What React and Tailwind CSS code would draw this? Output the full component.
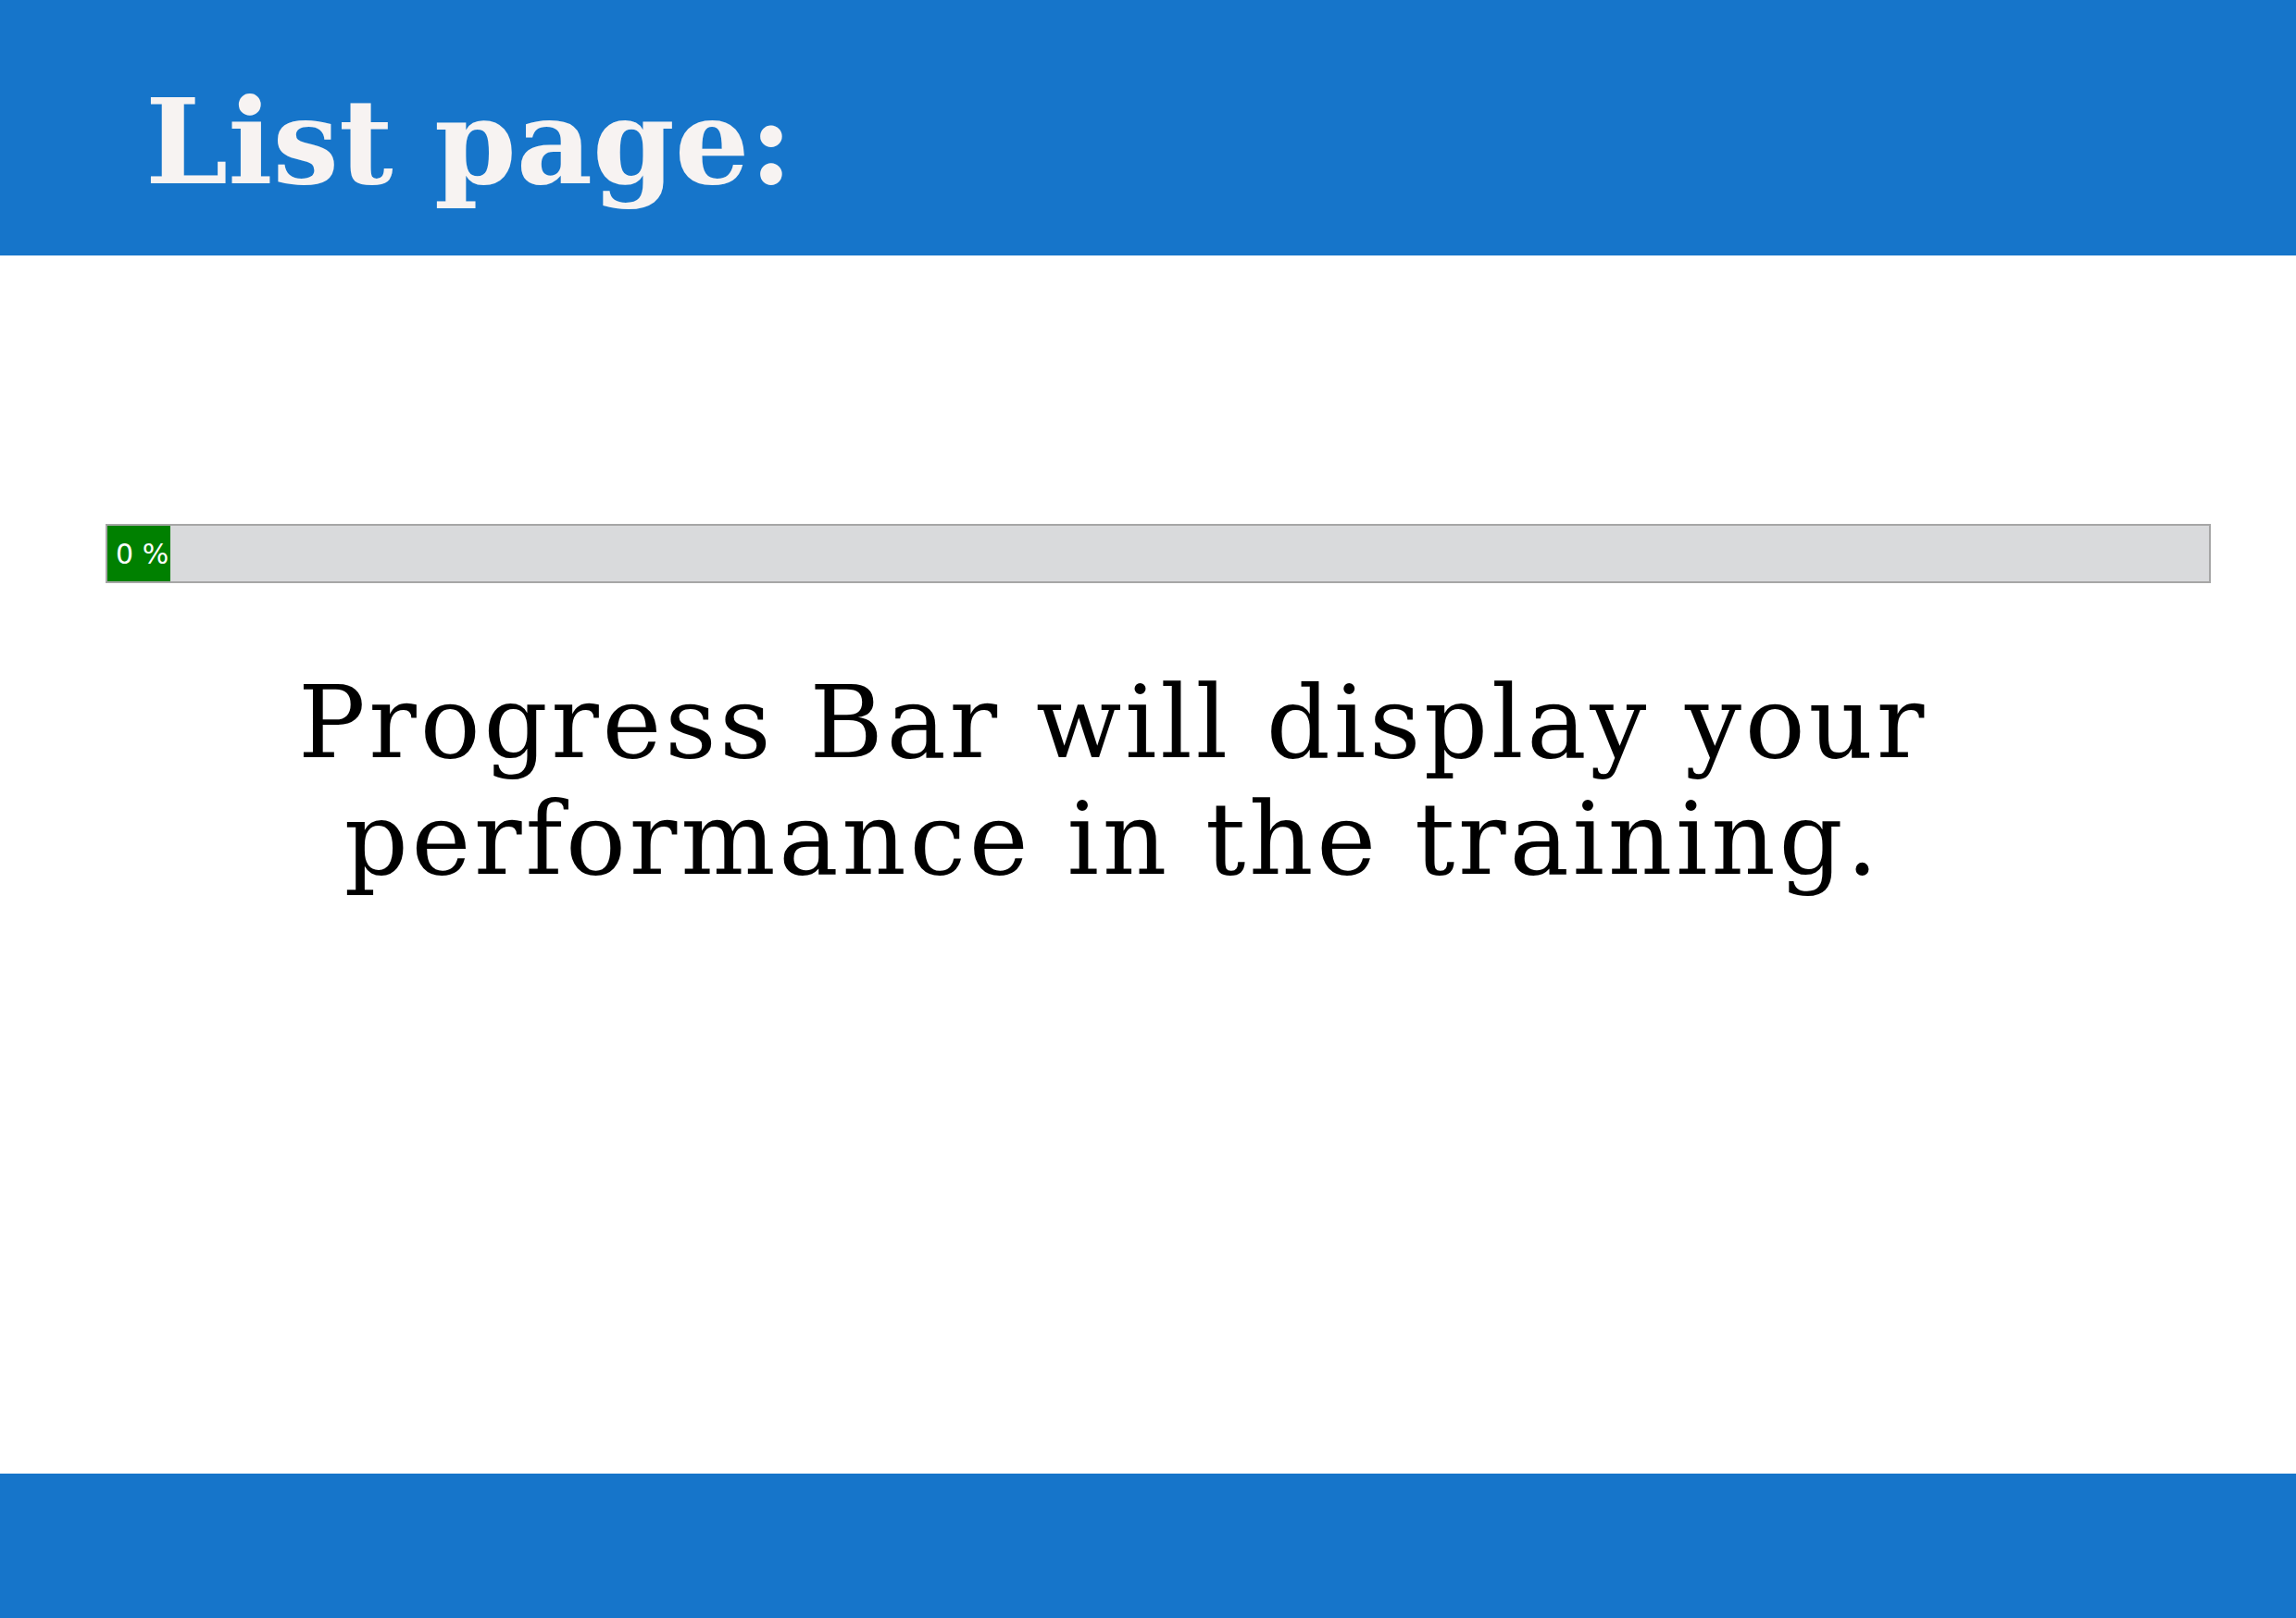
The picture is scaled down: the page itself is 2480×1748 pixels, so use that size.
export default function App() {
  const progress = 0

  return (
    <div className="flex h-[1748px] w-[2480px] flex-col bg-white">
      {/* Header */}
      <header className="h-[276px] shrink-0 bg-[#1675ca] pl-[157px] pt-[90px]">
        <h1 className="font-['DejaVu_Serif',serif] text-[127px] font-bold leading-none text-[#f7f3f2]">
          List page:
        </h1>
      </header>

      {/* Body */}
      <main className="flex-1 pt-[290px]">
        <div className="ml-[114px] mr-[92px] flex h-[64px] border-2 border-[#a6a6a6] bg-[#d9dadc]">
          <div
            className="flex items-center bg-[#008000] pl-[9px] font-['DejaVu_Sans',sans-serif] text-[30px] text-white"
            style={{ width: `${Math.max(progress, 3)}%` }}
          >
            {progress} %
          </div>
        </div>

        <p className="mt-[88px] pr-[76px] text-center font-['DejaVu_Serif',serif] text-[108px] leading-[126px] tracking-[3.7px] text-black">
          Progress Bar will display your
          <br />
          performance in the training.
        </p>
      </main>

      {/* Footer */}
      <footer className="h-[156px] shrink-0 bg-[#1675ca]" />
    </div>
  )
}
